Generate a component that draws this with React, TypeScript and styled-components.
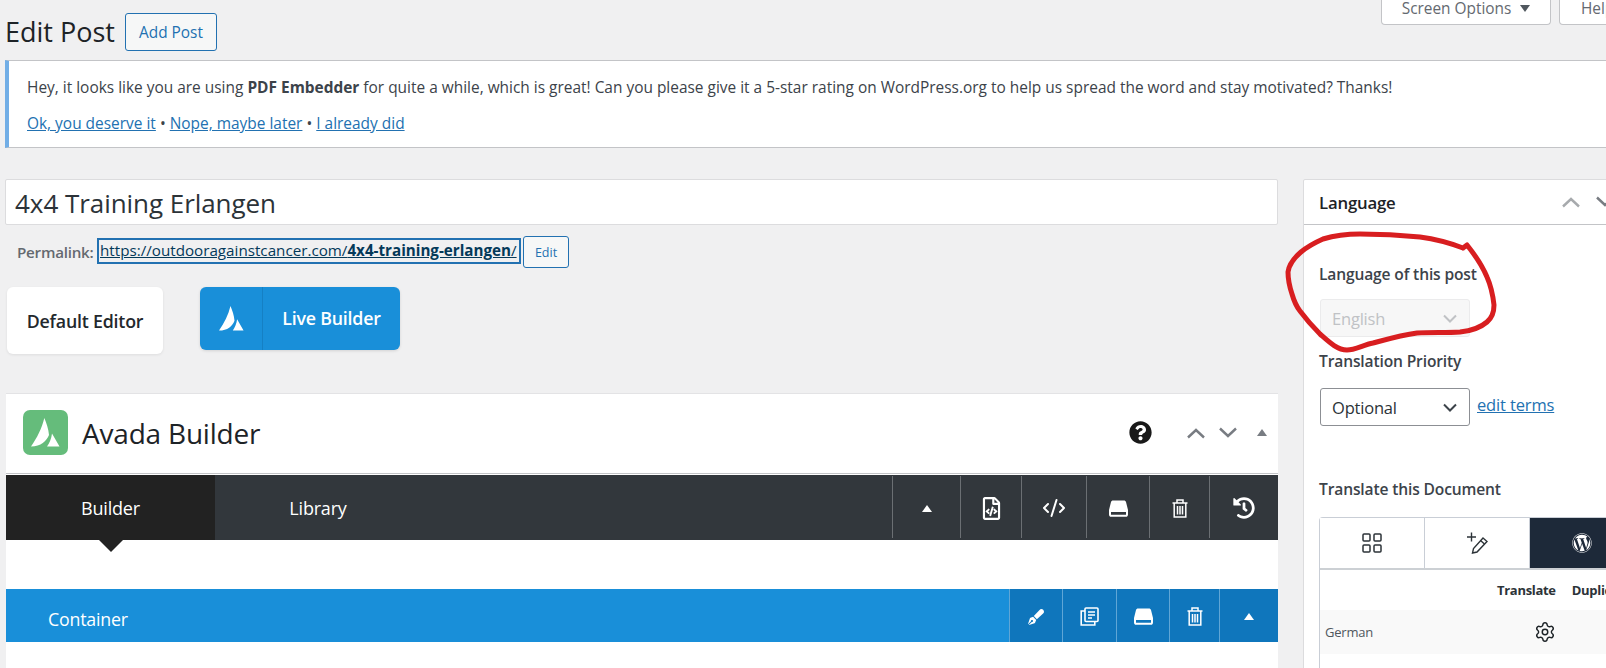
import React from 'react';
import styled, { createGlobalStyle } from 'styled-components';
import { CodeXml, LayoutGrid, Settings } from 'lucide-react';
import { FaHistory, FaPenFancy, FaQuestionCircle, FaRegFileCode, FaWordpress } from 'react-icons/fa';

const GlobalStyle = createGlobalStyle`
  html, body {
    margin: 0;
    padding: 0;
    background: #f0f0f1;
    overflow: hidden;
  }
  * { box-sizing: border-box; }
`;

const Page = styled.div`
  position: relative;
  width: 1606px;
  height: 668px;
  overflow: hidden;
  background: #f0f0f1;
  color: #3c434a;
  font-family: "Open Sans", "Noto Sans", sans-serif;
  font-size: 15.45px;
`;

const TopBar = styled.div`
  display: flex;
  justify-content: space-between;
  height: 60px;
  padding-left: 5px;
`;

const TitleGroup = styled.div`
  display: flex;
  align-items: flex-start;
  gap: 10px;
  padding-top: 13px;
`;

const PageTitle = styled.h1`
  margin: 0;
  font-size: 27px;
  font-weight: 400;
  line-height: 37px;
  color: #1d2327;
`;

const OutlineButton = styled.a`
  display: flex;
  align-items: center;
  justify-content: center;
  width: 92px;
  height: 38px;
  border: 1px solid #2271b1;
  border-radius: 3px;
  background: #f6f7f7;
  color: #2271b1;
  font-size: 15.4px;
`;

const ScreenTabs = styled.div`
  display: flex;
  gap: 8px;
  align-items: flex-start;
  margin-right: -48px;
`;

const ScreenTab = styled.div<{ $width: number; $start?: boolean }>`
  display: flex;
  align-items: center;
  justify-content: ${p => (p.$start ? 'flex-start' : 'center')};
  gap: 9px;
  width: ${p => p.$width}px;
  height: 25px;
  padding: 0 0 8px ${p => (p.$start ? '21px' : '0')};
  background: #fff;
  border: 1px solid #c3c4c7;
  border-top: none;
  border-radius: 0 0 4px 4px;
  color: #646970;
  font-size: 15.4px;
`;

const DownTriangle = styled.span`
  width: 0;
  height: 0;
  border-left: 5px solid transparent;
  border-right: 5px solid transparent;
  border-top: 7px solid #50575e;
`;

const Notice = styled.div`
  height: 88px;
  margin-left: 5px;
  padding: 15px 0 0 18px;
  background: #fff;
  border: 1px solid #c3c4c7;
  border-left: 4px solid #72aee6;
  border-right: none;
  line-height: 22px;
`;

const NoticeLinks = styled.div`
  margin-top: 14px;
`;

const TextLink = styled.a`
  color: #2271b1;
  text-decoration: underline;
`;

const Columns = styled.div`
  display: grid;
  grid-template-columns: 1273px 340px;
  column-gap: 25px;
  margin-top: 31px;
  padding-left: 5px;
`;

const MainColumn = styled.div`
  display: flex;
  flex-direction: column;
`;

const TitleField = styled.div`
  height: 46px;
  padding: 2px 9px 0;
  display: flex;
  align-items: center;
  background: #fff;
  border: 1px solid #dcdcde;
  border-radius: 2px;
  color: #2c3338;
  font-size: 26px;
  letter-spacing: -0.05px;
`;

const PermalinkRow = styled.div`
  display: flex;
  align-items: center;
  height: 32px;
  margin-top: 11px;
  padding-left: 12px;
`;

const PermalinkLabel = styled.strong`
  width: 80px;
  color: #646970;
  font-size: 15.2px;
  font-weight: 600;
  letter-spacing: -0.25px;
  white-space: nowrap;
`;

const PermalinkUrl = styled.a`
  display: block;
  width: 424px;
  height: 26px;
  margin-top: -3px;
  border: 2px solid #2271b1;
  color: #043959;
  text-decoration: underline;
  font-size: 15.2px;
  line-height: 21px;
  white-space: nowrap;
  overflow: hidden;
  padding-left: 1px;
`;

const SmallButton = styled.a`
  display: flex;
  align-items: center;
  justify-content: center;
  width: 46px;
  height: 32px;
  margin-left: 2px;
  border: 1px solid #2271b1;
  border-radius: 3px;
  background: #f6f7f7;
  color: #2271b1;
  font-size: 12.5px;
`;

const BuilderSwitch = styled.div`
  display: flex;
  align-items: flex-start;
  gap: 37px;
  margin-top: 19px;
  padding-left: 2px;
`;

const DefaultEditorButton = styled.div`
  display: flex;
  align-items: center;
  justify-content: center;
  width: 156px;
  height: 67px;
  background: #fff;
  border-radius: 6px;
  box-shadow: 0 1px 3px rgba(0, 0, 0, 0.08);
  color: #23282d;
  font-size: 17.8px;
  font-weight: 600;
  letter-spacing: -0.2px;
`;

const LiveBuilderButton = styled.div`
  display: flex;
  width: 200px;
  height: 63px;
  background: #198fd9;
  border-radius: 6px;
  box-shadow: 0 1px 3px rgba(0, 0, 0, 0.12);
  color: #fff;
  font-size: 17.8px;
  font-weight: 600;
  letter-spacing: -0.2px;
`;

const LiveIcon = styled.div`
  display: flex;
  align-items: center;
  justify-content: center;
  width: 63px;
  border-right: 1px solid #1580c4;
  padding-bottom: 1px;
`;

const LiveLabel = styled.div`
  flex: 1;
  display: flex;
  align-items: center;
  justify-content: center;
  padding-bottom: 2px;
`;

const BuilderBox = styled.section`
  margin-top: 39px;
  margin-left: 1px;
  height: 300px;
  background: #fff;
  border: 1px solid #e3e3e5;
  border-left: none;
  border-right: none;
`;

const BuilderHeader = styled.div`
  display: flex;
  align-items: center;
  height: 80px;
  padding: 0 11px 2px 17px;
  border-bottom: 1px solid #c3c4c7;
`;

const BuilderLogo = styled.div`
  display: flex;
  align-items: center;
  justify-content: center;
  width: 45px;
  height: 45px;
  background: #65bc7b;
  border-radius: 7px;
`;

const BuilderTitle = styled.h2`
  flex: 1;
  margin: 0 0 0 14px;
  color: #1d2327;
  font-size: 28px;
  font-weight: 400;
  letter-spacing: -0.2px;
`;

const HeaderControls = styled.div`
  display: flex;
  align-items: center;
`;

const HelpIcon = styled(FaQuestionCircle)`
  display: block;
  width: 23px;
  height: 23px;
  color: #191919;
  margin-right: 34px;
`;

const ControlSvg = styled.svg<{ $light?: boolean }>`
  display: block;
  width: 20px;
  height: 12px;
  fill: none;
  stroke: ${p => (p.$light ? '#a7aaad' : '#787c82')};
  stroke-width: 2.4;
`;

const ControlGap = styled.div<{ $width: number }>`
  width: ${p => p.$width}px;
`;

const CollapseTriangle = styled.span<{ $color: string; $size?: number }>`
  width: 0;
  height: 0;
  border-left: ${p => p.$size ?? 5}px solid transparent;
  border-right: ${p => p.$size ?? 5}px solid transparent;
  border-bottom: ${p => (p.$size ?? 5) + 2}px solid ${p => p.$color};
`;

const DarkBar = styled.div`
  display: flex;
  height: 65px;
  margin-top: 1px;
  background: #32373c;
`;

const ActiveTab = styled.div`
  position: relative;
  display: flex;
  align-items: center;
  justify-content: center;
  width: 209px;
  background: #222;
  color: #fff;
  font-size: 18px;
  letter-spacing: -0.2px;

  &::after {
    content: '';
    position: absolute;
    left: 50%;
    top: 100%;
    margin-left: -12px;
    border-left: 12px solid transparent;
    border-right: 12px solid transparent;
    border-top: 12px solid #222;
  }
`;

const PlainTab = styled.div`
  display: flex;
  align-items: center;
  justify-content: center;
  width: 206px;
  color: #fff;
  font-size: 18px;
  letter-spacing: -0.2px;
`;

const BarSpacer = styled.div`
  flex: 1;
`;

const BarAction = styled.div<{ $width: number; $blue?: boolean }>`
  display: flex;
  align-items: center;
  justify-content: center;
  width: ${p => p.$width}px;
  padding-top: 2px;
  border-left: 1px solid ${p => (p.$blue ? '#5fa6d6' : '#6b6f73')};
  color: #fff;
  background: ${p => (p.$blue ? '#0f76bc' : 'transparent')};

  svg {
    display: block;
  }
`;

const DarkActionSlot = styled.div`
  display: flex;
  padding: 1px 0 2px;
`;

const ContainerBar = styled.div`
  display: flex;
  height: 53px;
  margin-top: 49px;
  background: #198fd9;
`;

const ContainerName = styled.div`
  flex: 1;
  padding: 18px 0 0 42px;
  color: #fff;
  font-size: 17.8px;
  letter-spacing: -0.2px;
`;

const SideColumn = styled.aside`
  height: 500px;
  background: #fff;
  border: 1px solid #dcdcde;
  border-radius: 2px 0 0 0;
`;

const SideHeader = styled.div`
  display: flex;
  align-items: center;
  height: 45px;
  padding-left: 15px;
  border-bottom: 1px solid #c3c4c7;
`;

const SideTitle = styled.h2`
  flex: 1;
  margin: 0;
  color: #1d2327;
  font-size: 16.8px;
  font-weight: 600;
  letter-spacing: -0.2px;
`;

const SideControls = styled.div`
  display: flex;
  gap: 14px;
  width: 74px;
  margin-right: 7px;
`;

const SideBody = styled.div`
  padding: 38px 0 0 15px;
`;

const FieldLabel = styled.div<{ $top?: number }>`
  margin-top: ${p => p.$top ?? 0}px;
  color: #3c434a;
  font-size: 15.6px;
  font-weight: 600;
  line-height: 22px;
  letter-spacing: -0.15px;
`;

const SelectRow = styled.div<{ $top: number }>`
  display: flex;
  align-items: flex-start;
  gap: 7px;
  margin: ${p => p.$top}px 0 0 1px;
`;

const SelectBox = styled.div<{ $disabled?: boolean }>`
  display: flex;
  align-items: center;
  justify-content: space-between;
  width: 150px;
  height: 38px;
  padding: 0 12px 0 11px;
  border: 1px solid ${p => (p.$disabled ? '#ebebec' : '#8c8f94')};
  border-radius: 3px;
  background: ${p => (p.$disabled ? '#f7f7f7' : '#fff')};
  color: ${p => (p.$disabled ? '#c0c2c5' : '#2c3338')};
  font-size: 16.5px;
  letter-spacing: -0.2px;
`;

const SelectChevron = styled.svg<{ $disabled?: boolean }>`
  width: 14px;
  height: 9px;
  fill: none;
  stroke: ${p => (p.$disabled ? '#c0c2c5' : '#3c434a')};
  stroke-width: 2;
`;

const TermsLink = styled(TextLink)`
  font-size: 16.5px;
  line-height: 34px;
  letter-spacing: -0.15px;
`;

const TranslateTable = styled.div`
  width: 320px;
  height: 200px;
  margin-top: 17px;
  border: 1px solid #c9ced6;
  border-right: none;
  border-radius: 4px 0 0 0;
`;

const TabStrip = styled.div`
  display: flex;
  height: 52px;
  border-bottom: 2px solid #ccd0d4;
`;

const ModeTab = styled.div<{ $active?: boolean }>`
  display: flex;
  align-items: center;
  justify-content: center;
  width: 105px;
  background: ${p => (p.$active ? '#1d2939' : '#fff')};
  color: ${p => (p.$active ? '#fff' : '#2c3338')};
  border-right: 1px solid #c9ced6;
`;

const TableHead = styled.div`
  display: flex;
  height: 40px;
  align-items: center;
  color: #2c3338;
  font-size: 13px;
  font-weight: 700;
  letter-spacing: -0.3px;
  padding-left: 177px;
  gap: 16px;
  white-space: nowrap;
`;

const TableRow = styled.div`
  display: flex;
  align-items: center;
  height: 44px;
  padding-left: 5px;
  background: #f9f9f9;
  color: #50575e;
  font-size: 13px;
  letter-spacing: -0.2px;
`;

const GearCell = styled.div`
  margin-left: 161px;
  color: #1d2327;

  svg {
    display: block;
  }
`;

const Scribble = styled.svg`
  position: absolute;
  left: 0;
  top: 0;
  width: 1606px;
  height: 668px;
  pointer-events: none;
  fill: none;
  stroke: #d81e20;
  stroke-width: 5;
  stroke-linecap: round;
  stroke-linejoin: round;
`;

const AvadaMark = ({ size, color }: { size: number; color: string }) => (
  <svg width={size} height={size} viewBox="0 0 29 29">
    <path d="M13.3 0 C15.5 5 17.5 11 18 17 C15.5 23 10 28.5 0 28.5 C6 20 11 10 13.3 0 Z" fill={color} />
    <path d="M21 15.5 L28.5 28.5 L16 28.5 C18.5 25 20.5 20 21 15.5 Z" fill={color} />
  </svg>
);

const DriveIcon = () => (
  <svg width="19" height="17" viewBox="0 0 19 17" fill="#fff">
    <path d="M4 0.5 H15 C16 0.5 16.5 1 17 2 L19 10 V14.5 C19 16 18 16.8 17 16.8 H2 C1 16.8 0 16 0 14.5 V10 L2 2 C2.5 1 3 0.5 4 0.5 Z M2 12 V14.8 H17 V12 Z" fillRule="evenodd" />
  </svg>
);

const CopyIcon = () => (
  <svg width="19" height="19" viewBox="0 0 19 19" fill="none" stroke="#fff" strokeWidth="1.6">
    <rect x="5" y="1" width="13" height="13.5" rx="1" />
    <path d="M5 4 H1.2 V18 H14.8 V14.5" />
    <path d="M8 5 H15 M8 8 H15 M8 11 H12" />
  </svg>
);

const TrashIcon = () => (
  <svg width="16" height="19" viewBox="0 0 16 19" fill="none" stroke="#fff" strokeWidth="1.5">
    <path d="M0.5 4 H15.5" />
    <path d="M5 4 V1 H11 V4" />
    <path d="M2.2 4 V18 H13.8 V4" />
    <path d="M5.5 7 V15.5 M8 7 V15.5 M10.5 7 V15.5" />
  </svg>
);

const PenPlusIcon = () => (
  <svg width="22" height="22" viewBox="0 0 22 22" fill="none" stroke="#2c3338" strokeWidth="1.4">
    <path d="M1 5 H10 M5.5 0.5 V9.5" />
    <path d="M17 6 L21 9.5 L11 20 L6.5 21 L7.5 16.5 Z" />
    <path d="M14.5 8.5 L18.5 12" />
  </svg>
);

const App: React.FC = () => {
  return (
    <Page>
      <GlobalStyle />
      <TopBar>
        <TitleGroup>
          <PageTitle>Edit Post</PageTitle>
          <OutlineButton>Add Post</OutlineButton>
        </TitleGroup>
        <ScreenTabs>
          <ScreenTab $width={170}>
            Screen Options <DownTriangle />
          </ScreenTab>
          <ScreenTab $width={95} $start>Help</ScreenTab>
        </ScreenTabs>
      </TopBar>

      <Notice>
        Hey, it looks like you are using <strong>PDF Embedder</strong> for quite a while, which is great! Can you please give it a 5-star rating on WordPress.org to help us spread the word and stay motivated? Thanks!
        <NoticeLinks>
          <TextLink>Ok, you deserve it</TextLink> • <TextLink>Nope, maybe later</TextLink> • <TextLink>I already did</TextLink>
        </NoticeLinks>
      </Notice>

      <Columns>
        <MainColumn>
          <TitleField>4x4 Training Erlangen</TitleField>
          <PermalinkRow>
            <PermalinkLabel>Permalink:</PermalinkLabel>
            <PermalinkUrl>
              https://outdooragainstcancer.com/<strong>4x4-training-erlangen</strong>/
            </PermalinkUrl>
            <SmallButton>Edit</SmallButton>
          </PermalinkRow>
          <BuilderSwitch>
            <DefaultEditorButton>Default Editor</DefaultEditorButton>
            <LiveBuilderButton>
              <LiveIcon>
                <AvadaMark size={25} color="#fff" />
              </LiveIcon>
              <LiveLabel>Live Builder</LiveLabel>
            </LiveBuilderButton>
          </BuilderSwitch>

          <BuilderBox>
            <BuilderHeader>
              <BuilderLogo>
                <AvadaMark size={29} color="#fff" />
              </BuilderLogo>
              <BuilderTitle>Avada Builder</BuilderTitle>
              <HeaderControls>
                <HelpIcon />
                <ControlSvg viewBox="0 0 20 12">
                  <path d="M2 10.5 L10 3 L18 10.5" />
                </ControlSvg>
                <ControlGap $width={12} />
                <ControlSvg viewBox="0 0 20 12">
                  <path d="M2 1.5 L10 9 L18 1.5" />
                </ControlSvg>
                <ControlGap $width={19} />
                <CollapseTriangle $color="#787c82" />
              </HeaderControls>
            </BuilderHeader>

            <DarkBar>
              <ActiveTab>Builder</ActiveTab>
              <PlainTab>Library</PlainTab>
              <BarSpacer />
              <DarkActionSlot>
                <BarAction $width={68}><CollapseTriangle $color="#fff" $size={5} /></BarAction>
                <BarAction $width={61}><FaRegFileCode size={23} /></BarAction>
                <BarAction $width={65}><CodeXml size={24} strokeWidth={2} /></BarAction>
                <BarAction $width={63}><DriveIcon /></BarAction>
                <BarAction $width={60}><TrashIcon /></BarAction>
                <BarAction $width={69}><FaHistory size={22} /></BarAction>
              </DarkActionSlot>
            </DarkBar>

            <ContainerBar>
              <ContainerName>Container</ContainerName>
              <BarAction $blue $width={53}><FaPenFancy size={16} /></BarAction>
              <BarAction $blue $width={54}><CopyIcon /></BarAction>
              <BarAction $blue $width={53}><DriveIcon /></BarAction>
              <BarAction $blue $width={50}><TrashIcon /></BarAction>
              <BarAction $blue $width={59}><CollapseTriangle $color="#fff" $size={5} /></BarAction>
            </ContainerBar>
          </BuilderBox>
        </MainColumn>

        <SideColumn>
          <SideHeader>
            <SideTitle>Language</SideTitle>
            <SideControls>
              <ControlSvg $light viewBox="0 0 20 12">
                <path d="M2 10.5 L10 3 L18 10.5" />
              </ControlSvg>
              <ControlSvg viewBox="0 0 20 12">
                <path d="M2 1.5 L10 9 L18 1.5" />
              </ControlSvg>
            </SideControls>
          </SideHeader>
          <SideBody>
            <FieldLabel>Language of this post</FieldLabel>
            <SelectRow $top={14}>
              <SelectBox $disabled>
                English
                <SelectChevron $disabled viewBox="0 0 14 9"><path d="M1 1.5 L7 7.5 L13 1.5" /></SelectChevron>
              </SelectBox>
            </SelectRow>
            <FieldLabel $top={13}>Translation Priority</FieldLabel>
            <SelectRow $top={16}>
              <SelectBox>
                Optional
                <SelectChevron viewBox="0 0 14 9"><path d="M1 1.5 L7 7.5 L13 1.5" /></SelectChevron>
              </SelectBox>
              <TermsLink>edit terms</TermsLink>
            </SelectRow>
            <FieldLabel $top={52}>Translate this Document</FieldLabel>
            <TranslateTable>
              <TabStrip>
                <ModeTab><LayoutGrid size={24} strokeWidth={1.5} /></ModeTab>
                <ModeTab><PenPlusIcon /></ModeTab>
                <ModeTab $active><FaWordpress size={20} /></ModeTab>
              </TabStrip>
              <TableHead>
                <span>Translate</span>
                <span>Duplicate</span>
              </TableHead>
              <TableRow>
                German
                <GearCell><Settings size={22} strokeWidth={1.6} /></GearCell>
              </TableRow>
            </TranslateTable>
          </SideBody>
        </SideColumn>
      </Columns>

      <Scribble viewBox="0 0 1606 668">
        <path d="M1463 248 C1450 243 1435 239 1420 237 C1400 235 1380 234 1360 234 C1345 234 1333 236 1323 239 C1314 243 1307 247 1301 252 C1294 258 1289 264 1288 272 C1288 280 1290 288 1292 294 C1294 301 1296 306 1300 311 C1306 319 1313 327 1320 334 C1328 341 1337 350 1347 350 C1355 350 1363 345 1373 343 C1388 339 1402 335 1417 333 C1431 332 1446 333 1460 332 C1470 331 1480 328 1487 322 C1493 317 1494 311 1494 305 C1493 296 1491 286 1487 277 C1482 265 1475 255 1467 245 L1463 248" />
      </Scribble>
    </Page>
  );
};

export default App;
